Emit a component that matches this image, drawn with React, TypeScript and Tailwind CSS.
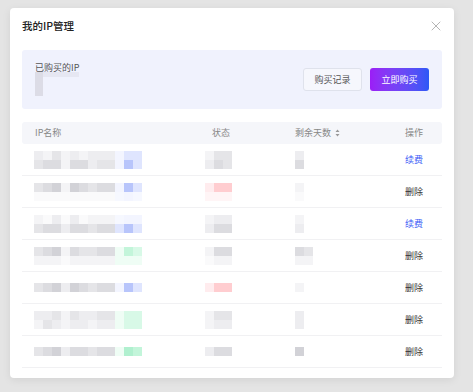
import { X } from "lucide-react"

// pixelated placeholders for redacted data, one class per 9px cell
const g0 = "bg-[#fafafb]"
const g1 = "bg-[#f4f4f6]"
const g2 = "bg-[#ededf0]"
const g3 = "bg-[#e5e5e8]"
const g4 = "bg-[#dcdce0]"
const g5 = "bg-[#d2d2d7]"
const b1 = "bg-[#f3f5ff]"
const b2 = "bg-[#dfe5fe]"
const b3 = "bg-[#b8c5fb]"
const b0 = "bg-[#f6f8ff]"
const n1 = "bg-[#effdf5]"
const n2 = "bg-[#d8f9e7]"
const n3 = "bg-[#c3f5da]"
const n4 = "bg-[#b0f0cf]"
const r1 = "bg-[#ffecee]"
const r2 = "bg-[#ffcdd0]"
const r0 = "bg-[#fff5f6]"

type Row = {
  name: string[][]
  status: string[][]
  days: string[][]
  action: "renew" | "delete"
}

const rows: Row[] = [
  {
    name: [
      [g2, g1, g3, g1, g2, g1, g2, g2, g2, b1, b2, b2],
      [g3, g4, g4, g1, g4, g4, g2, g3, g3, b1, b3, b2],
    ],
    status: [
      [g1, g3, g3],
      [g2, g4, g3],
    ],
    days: [[g2], [g4]],
    action: "renew",
  },
  {
    name: [
      [g3, g4, g5, g1, g5, g4, g3, g4, g4, b1, b3, b2],
      [g0, g0, g0, g0, g0, g0, g0, g0, g0, b0, b1, b0],
    ],
    status: [
      [r1, r2, r2],
      [r0, r0, r0],
    ],
    days: [[g1], [g0]],
    action: "delete",
  },
  {
    name: [
      [g1, g0, g2, g0, g2, g0, g1, g1, g1, b0, b1, b1],
      [g3, g4, g4, g2, g4, g4, g3, g4, g4, b2, b3, b2],
    ],
    status: [
      [g1, g2, g2],
      [g2, g4, g4],
    ],
    days: [[g1], [g2]],
    action: "renew",
  },
  {
    name: [
      [g3, g4, g5, g1, g4, g3, g3, g4, g4, n1, n3, n2],
      [g1, g1, g1, g0, g1, g1, g1, g1, g1, n1, n1, n1],
    ],
    status: [
      [g1, g4, g4],
      [g0, g1, g1],
    ],
    days: [
      [g4, g3],
      [g1, g1],
    ],
    action: "delete",
  },
  {
    name: [[g3, g4, g5, g2, g5, g4, g3, g4, g4, b1, b3, b2]],
    status: [[r1, r2, r2]],
    days: [[g1]],
    action: "delete",
  },
  {
    name: [
      [g2, g2, g3, g1, g3, g2, g2, g3, g3, n1, n2, n2],
      [g1, g3, g2, g1, g2, g2, g1, g2, g2, n1, n2, n2],
    ],
    status: [
      [g1, g3, g3],
      [g1, g2, g2],
    ],
    days: [[g2], [g2]],
    action: "delete",
  },
  {
    name: [[g3, g4, g5, g2, g4, g4, g3, g4, g4, n1, n4, n3]],
    status: [[g2, g4, g4]],
    days: [[g5]],
    action: "delete",
  },
]

function Pixels({ cells }: { cells: string[][] }) {
  return (
    <div className="flex flex-col">
      {cells.map((line, i) => (
        <div key={i} className="flex">
          {line.map((c, j) => (
            <div key={j} className={`h-[9px] w-[9px] ${c}`} />
          ))}
        </div>
      ))}
    </div>
  )
}

export default function App() {
  return (
    <div
      className="h-[392px] w-[473px] bg-[#e4e4e4] pl-[10px] pt-[8px]"
      style={{ fontFamily: '"Noto Sans CJK SC", "Noto Sans", sans-serif' }}
    >
      <div className="h-[370px] w-[444px] rounded-[4px] bg-white px-[12px] shadow-[0_2px_8px_rgba(0,0,0,0.08)]">
        <div className="flex h-[42px] items-center justify-between pb-[6px]">
          <h1 className="text-[10.5px] font-medium leading-none text-[#222]">我的IP管理</h1>
          <X className="mr-[-2px] h-[16px] w-[16px] text-[#999]" strokeWidth={1.1} />
        </div>

        <div className="flex h-[59px] items-start justify-between rounded-[3px] bg-[#f0f2fd] pl-[13px] pr-[13px] pt-[12px]">
          <div className="flex flex-col">
            <span className="text-[9px] leading-[11px] text-[#555]">已购买的IP</span>
            <div className="mt-[-1px] flex">
              <div className="h-[24px] w-[8px] bg-[#dcdce6]" />
              <div className="h-[5px] w-[36px] bg-[#e6e7f2]" />
            </div>
          </div>
          <div className="mt-[6px] flex gap-[8px]">
            <button className="h-[23px] w-[59px] rounded-[3px] border border-[#dfe2ec] bg-[#f6f7fd] text-[9px] text-[#555]">
              购买记录
            </button>
            <button className="h-[23px] w-[59px] rounded-[3px] bg-gradient-to-r from-[#9b1df6] to-[#2b58f6] text-[9px] text-white">
              立即购买
            </button>
          </div>
        </div>

        <div className="mt-[13px]">
          <div className="grid h-[22px] grid-cols-[171px_90px_110px_1fr] items-center rounded-[3px] bg-[#f5f6fa] pl-[12px] text-[9px] text-[#888]">
            <span className="pl-[1px]">IP名称</span>
            <span className="pl-[7px]">状态</span>
            <span className="flex items-center gap-[4px]">
              剩余天数
              <svg width="5" height="8" viewBox="0 0 5 8" className="text-[#999]">
                <path d="M2.5 0.5 L4.5 3 H0.5 Z M2.5 7.5 L4.5 5 H0.5 Z" fill="currentColor" />
              </svg>
            </span>
            <span>操作</span>
          </div>

          {rows.map((row, i) => (
            <div
              key={i}
              className="grid h-[32px] grid-cols-[171px_90px_110px_1fr] items-center border-b border-[#f1f1f3] pl-[12px]"
            >
              <Pixels cells={row.name} />
              <Pixels cells={row.status} />
              <Pixels cells={row.days} />
              <span
                className={
                  row.action === "renew"
                    ? "text-[9px] text-[#3c5cf6]"
                    : "text-[9px] text-[#333]"
                }
              >
                {row.action === "renew" ? "续费" : "删除"}
              </span>
            </div>
          ))}
        </div>
      </div>
    </div>
  )
}
